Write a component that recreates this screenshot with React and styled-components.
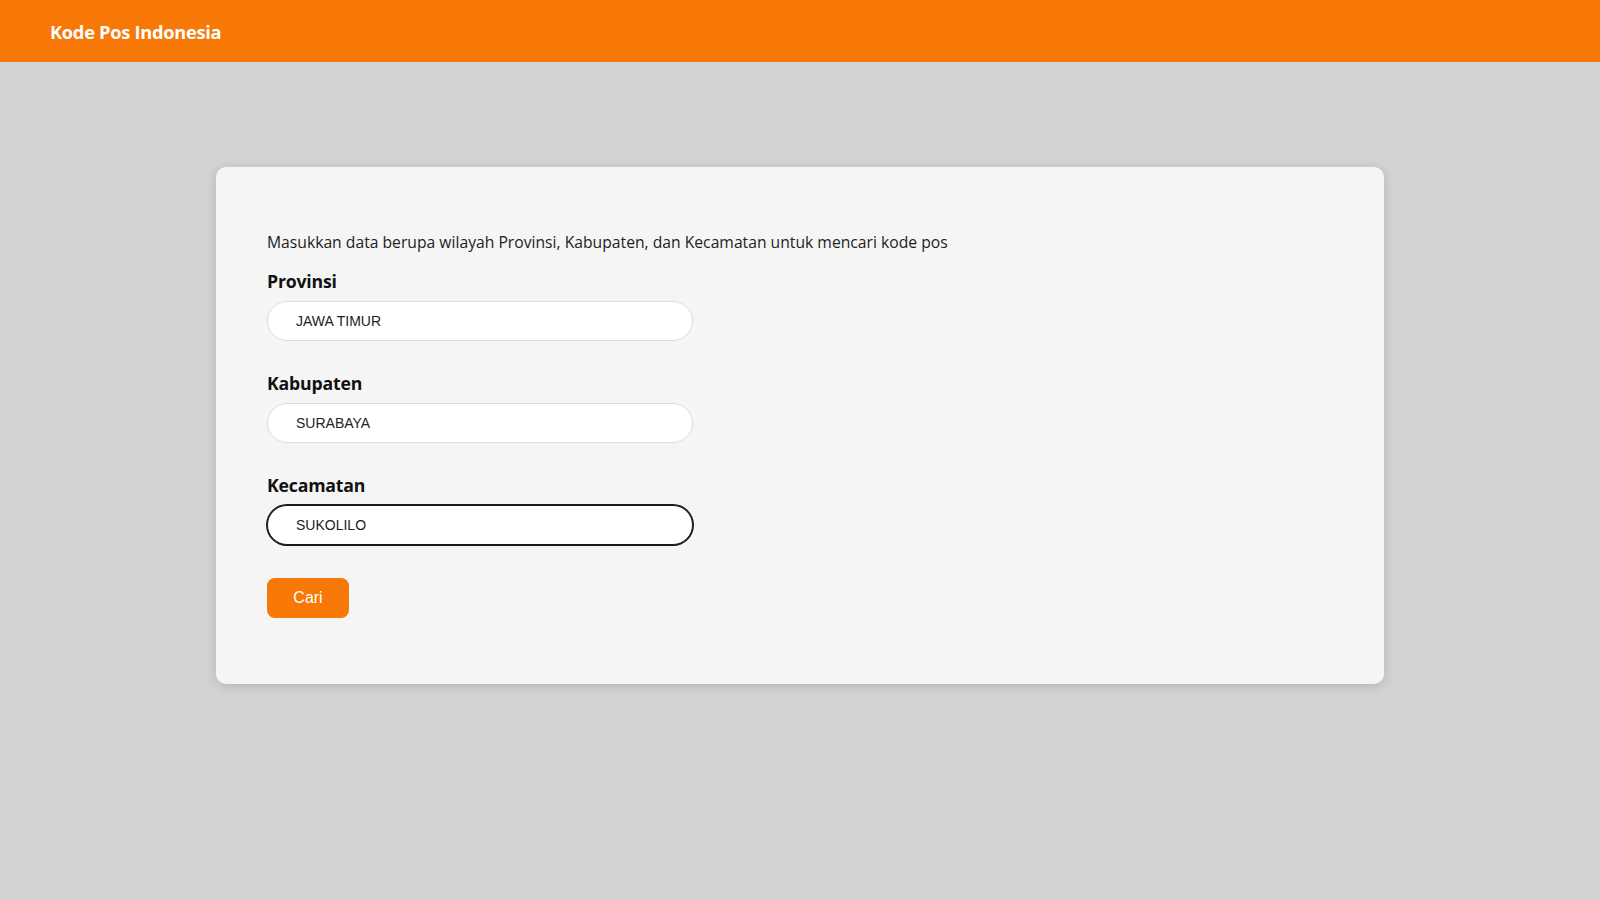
import React, { useState } from 'react';
import styled, { createGlobalStyle } from 'styled-components';

const GlobalStyle = createGlobalStyle`
  * {
    box-sizing: border-box;
  }
  body {
    margin: 0;
    background: #d3d3d3;
    font-family: 'Open Sans', 'Noto Sans', sans-serif;
    min-height: 100vh;
  }
`;

const Header = styled.header`
  height: 62px;
  background: #f77707;
  display: flex;
  align-items: center;
  padding: 1px 50px 0;
`;

const Brand = styled.h1`
  margin: 0;
  color: #fff;
  font-family: 'Open Sans', 'Noto Sans', sans-serif;
  font-size: 18.3px;
  font-weight: 700;
  letter-spacing: -0.3px;
`;

const Main = styled.main`
  padding-top: 105px;
`;

const Card = styled.section`
  width: 1168px;
  margin: 0 auto;
  background: #f5f5f5;
  border-radius: 10px;
  box-shadow: 0 2px 12px rgba(0, 0, 0, 0.15);
  padding: 64px 51px 66px;
  display: flex;
  flex-direction: column;
  align-items: flex-start;
`;

const Intro = styled.p`
  margin: 0;
  font-size: 15.7px;
  line-height: 22px;
  color: #222;
`;

const Form = styled.form`
  margin-top: 16px;
  display: flex;
  flex-direction: column;
  align-items: flex-start;
`;

const Field = styled.div`
  display: flex;
  flex-direction: column;
  gap: 8px;
  margin-bottom: 30px;
`;

const Label = styled.label`
  font-family: 'Open Sans', 'Noto Sans', sans-serif;
  font-size: 17.7px;
  line-height: 24px;
  font-weight: 700;
  color: #111;
  letter-spacing: -0.2px;
`;

const Input = styled.input`
  width: 426px;
  height: 40px;
  border-radius: 20px;
  border: 1px solid ${(props) => (props.focused ? '#1a1a1a' : '#dcdcdc')};
  box-shadow: ${(props) => (props.focused ? '0 0 0 1px #1a1a1a' : 'none')};
  background: #fff;
  padding: 0 28px;
  font-family: 'Liberation Sans', Arial, sans-serif;
  font-size: 14px;
  color: #222;
  outline: none;
`;

const Button = styled.button`
  margin-top: 3px;
  width: 82px;
  height: 40px;
  border: none;
  border-radius: 8px;
  background: #f77707;
  color: #fff;
  font-family: 'Liberation Sans', Arial, sans-serif;
  font-size: 16px;
  cursor: pointer;
`;

const fields = [
  { id: 'provinsi', label: 'Provinsi', value: 'JAWA TIMUR' },
  { id: 'kabupaten', label: 'Kabupaten', value: 'SURABAYA' },
  { id: 'kecamatan', label: 'Kecamatan', value: 'SUKOLILO', focused: true },
];

export default function App() {
  const [values, setValues] = useState(
    Object.fromEntries(fields.map((f) => [f.id, f.value]))
  );

  return (
    <>
      <GlobalStyle />
      <Header>
        <Brand>Kode Pos Indonesia</Brand>
      </Header>
      <Main>
        <Card>
          <Intro>
            Masukkan data berupa wilayah Provinsi, Kabupaten, dan Kecamatan untuk mencari kode pos
          </Intro>
          <Form onSubmit={(e) => e.preventDefault()}>
            {fields.map((f) => (
              <Field key={f.id}>
                <Label htmlFor={f.id}>{f.label}</Label>
                <Input
                  id={f.id}
                  focused={f.focused}
                  value={values[f.id]}
                  onChange={(e) => setValues({ ...values, [f.id]: e.target.value })}
                />
              </Field>
            ))}
            <Button type="submit">Cari</Button>
          </Form>
        </Card>
      </Main>
    </>
  );
}
